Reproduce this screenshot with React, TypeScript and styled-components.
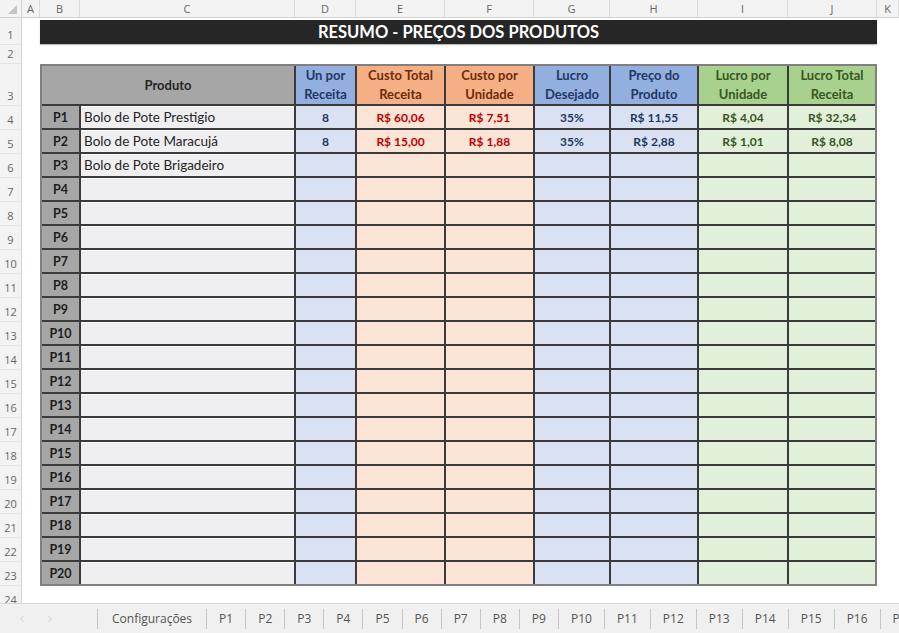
import React from 'react';
import styled, { createGlobalStyle } from 'styled-components';
import { ChevronLeft, ChevronRight } from 'lucide-react';

const GlobalStyle = createGlobalStyle`
  html, body { margin: 0; padding: 0; background: #ffffff; }
  body {
    width: 899px;
    height: 633px;
    overflow: hidden;
    font-family: "Open Sans", "Liberation Sans", sans-serif;
  }
`;

const CELL_FONT = `"Lato", "Liberation Sans", sans-serif`;

type Col = { key: string; w: number };
const COLUMNS: Col[] = [
  { key: 'A', w: 18 },
  { key: 'B', w: 40 },
  { key: 'C', w: 215 },
  { key: 'D', w: 61 },
  { key: 'E', w: 89 },
  { key: 'F', w: 89 },
  { key: 'G', w: 76 },
  { key: 'H', w: 88 },
  { key: 'I', w: 90 },
  { key: 'J', w: 89 },
  { key: 'K', w: 22 },
];

const ROW_HEIGHTS: number[] = [27, 19, 42, ...Array(20).fill(24), 24];

type Tone = { head: string; headText: string; cell: string; text: string };
const BLUE: Tone = { head: '#93afdf', headText: '#1f3864', cell: '#d9e1f3', text: '#1f3864' };
const ORANGE: Tone = { head: '#f4b084', headText: '#6e2a0c', cell: '#fce4d6', text: '#c00000' };
const GREEN: Tone = { head: '#a9d18e', headText: '#375623', cell: '#e2efd9', text: '#375623' };

const VALUE_COLUMNS: { title: [string, string]; tone: Tone }[] = [
  { title: ['Un por', 'Receita'], tone: BLUE },
  { title: ['Custo Total', 'Receita'], tone: ORANGE },
  { title: ['Custo por', 'Unidade'], tone: ORANGE },
  { title: ['Lucro', 'Desejado'], tone: BLUE },
  { title: ['Preço do', 'Produto'], tone: BLUE },
  { title: ['Lucro por', 'Unidade'], tone: GREEN },
  { title: ['Lucro Total', 'Receita'], tone: GREEN },
];

type Product = { code: string; name: string; values: string[] };
const PRODUCTS: Product[] = Array.from({ length: 20 }, (_, i) => ({
  code: `P${i + 1}`,
  name: '',
  values: ['', '', '', '', '', '', ''],
}));
PRODUCTS[0] = { code: 'P1', name: 'Bolo de Pote Prestigio', values: ['8', 'R$ 60,06', 'R$ 7,51', '35%', 'R$ 11,55', 'R$ 4,04', 'R$ 32,34'] };
PRODUCTS[1] = { code: 'P2', name: 'Bolo de Pote Maracujá', values: ['8', 'R$ 15,00', 'R$ 1,88', '35%', 'R$ 2,88', 'R$ 1,01', 'R$ 8,08'] };
PRODUCTS[2] = { code: 'P3', name: 'Bolo de Pote Brigadeiro', values: ['', '', '', '', '', '', ''] };

const TABS = ['Configurações', ...Array.from({ length: 17 }, (_, i) => `P${i + 1}`)];

/* ---------- window frame ---------- */

const Window = styled.div`
  display: flex;
  flex-direction: column;
  width: 899px;
  height: 633px;
  overflow: hidden;
  background: #ffffff;
`;

/* ---------- column header strip ---------- */

const ColumnStrip = styled.div`
  display: flex;
  height: 18px;
  flex: none;
  box-sizing: border-box;
  background: #f3f3f3;
  border-bottom: 1px solid #d2d2d2;
`;

const Corner = styled.div`
  position: relative;
  width: 22px;
  flex: none;
  box-sizing: border-box;
  border-right: 1px solid #d2d2d2;
  &::after {
    content: '';
    position: absolute;
    right: 4px;
    bottom: 3px;
    border-left: 9px solid transparent;
    border-bottom: 9px solid #c4c4c4;
  }
`;

const ColumnLetter = styled.div<{ $w: number }>`
  width: ${(p) => p.$w}px;
  flex: none;
  box-sizing: border-box;
  border-right: 1px solid #dadada;
  display: flex;
  align-items: center;
  justify-content: center;
  font-size: 11px;
  color: #666666;
`;

/* ---------- body ---------- */

const Body = styled.div`
  display: flex;
  height: 585px;
  flex: none;
  overflow: hidden;
`;

const RowNumbers = styled.div`
  display: flex;
  flex-direction: column;
  width: 22px;
  flex: none;
  box-sizing: border-box;
  background: #f3f3f3;
  border-right: 1px solid #d2d2d2;
`;

const RowNumber = styled.div<{ $h: number }>`
  height: ${(p) => p.$h}px;
  flex: none;
  box-sizing: border-box;
  border-bottom: 1px solid #e4e4e4;
  display: flex;
  align-items: flex-end;
  justify-content: center;
  padding-bottom: 3px;
  font-size: 11px;
  line-height: 13px;
  color: #666666;
`;

const Sheet = styled.div`
  display: flex;
  flex-direction: column;
  padding-left: 18px;
`;

const TitleRow = styled.div`
  height: 27px;
  box-sizing: border-box;
  padding: 2px 0 1px;
`;

const TitleBar = styled.div`
  width: 837px;
  height: 24px;
  background: #262626;
  color: #ffffff;
  display: flex;
  align-items: center;
  justify-content: center;
  font-family: ${CELL_FONT};
  font-weight: 700;
  font-size: 16.5px;
  box-shadow: 0 1px 1px rgba(0, 0, 0, 0.25);
`;

const Table = styled.div`
  margin-top: 19px;
  width: 837px;
  box-sizing: border-box;
  display: grid;
  grid-template-columns: 37px 213px 59px 87px 87px 74px 86px 88px 86px;
  grid-template-rows: 38px repeat(20, 22px);
  gap: 2px;
  background: #3b3b3b;
  border: 2px solid #808080;
  font-family: ${CELL_FONT};
`;

const HeadCell = styled.div<{ $bg: string; $fg: string; $span?: number }>`
  grid-column: span ${(p) => p.$span ?? 1};
  background: ${(p) => p.$bg};
  color: ${(p) => p.$fg};
  display: flex;
  flex-direction: column;
  align-items: center;
  justify-content: center;
  font-weight: 700;
  font-size: 13px;
  line-height: 19px;
  text-align: center;
`;

const CodeCell = styled.div`
  background: #a6a6a6;
  color: #1e1e1e;
  display: flex;
  align-items: center;
  justify-content: center;
  font-weight: 700;
  font-size: 12.5px;
`;

const NameCell = styled.div`
  background: #efeef0;
  color: #262626;
  display: flex;
  align-items: center;
  padding-left: 3px;
  font-size: 13.5px;
  box-shadow: inset 0 1px 0 #ffffff;
`;

const ValueCell = styled.div<{ $bg: string; $fg: string }>`
  background: ${(p) => p.$bg};
  color: ${(p) => p.$fg};
  display: flex;
  align-items: center;
  justify-content: center;
  font-weight: 700;
  font-size: 12px;
`;

/* ---------- sheet tabs ---------- */

const TabBar = styled.div`
  display: flex;
  align-items: center;
  height: 30px;
  flex: none;
  box-sizing: border-box;
  background: #f0f0f0;
  border-top: 1px solid #d6d6d6;
  overflow: hidden;
  white-space: nowrap;
`;

const TabNav = styled.div`
  display: flex;
  align-items: center;
  gap: 18px;
  width: 97px;
  flex: none;
  box-sizing: border-box;
  padding-left: 17px;
  color: #c4c4c4;
`;

const Tab = styled.div<{ $pad: number }>`
  flex: none;
  padding: 0 ${(p) => p.$pad}px;
  border-left: 1px solid #c6c6c6;
  line-height: 20px;
  font-size: 12px;
  color: #555555;
`;

export default function App() {
  return (
    <Window>
      <GlobalStyle />
      <ColumnStrip>
        <Corner />
        {COLUMNS.map((c) => (
          <ColumnLetter key={c.key} $w={c.w}>
            {c.key}
          </ColumnLetter>
        ))}
      </ColumnStrip>

      <Body>
        <RowNumbers>
          {ROW_HEIGHTS.map((h, i) => (
            <RowNumber key={i} $h={h}>
              {i + 1}
            </RowNumber>
          ))}
        </RowNumbers>

        <Sheet>
          <TitleRow>
            <TitleBar>RESUMO - PREÇOS DOS PRODUTOS</TitleBar>
          </TitleRow>

          <Table>
            <HeadCell $bg="#a6a6a6" $fg="#262626" $span={2}>
              Produto
            </HeadCell>
            {VALUE_COLUMNS.map((c) => (
              <HeadCell key={c.title.join(' ')} $bg={c.tone.head} $fg={c.tone.headText}>
                <span>{c.title[0]}</span>
                <span>{c.title[1]}</span>
              </HeadCell>
            ))}

            {PRODUCTS.map((p) => (
              <React.Fragment key={p.code}>
                <CodeCell>{p.code}</CodeCell>
                <NameCell>{p.name}</NameCell>
                {p.values.map((v, j) => (
                  <ValueCell key={j} $bg={VALUE_COLUMNS[j].tone.cell} $fg={VALUE_COLUMNS[j].tone.text}>
                    {v}
                  </ValueCell>
                ))}
              </React.Fragment>
            ))}
          </Table>
        </Sheet>
      </Body>

      <TabBar>
        <TabNav>
          <ChevronLeft size={10} strokeWidth={2} />
          <ChevronRight size={10} strokeWidth={2} />
        </TabNav>
        {TABS.map((t, i) => (
          <Tab key={t} $pad={i === 0 ? 14 : 12}>
            {t}
          </Tab>
        ))}
      </TabBar>
    </Window>
  );
}
